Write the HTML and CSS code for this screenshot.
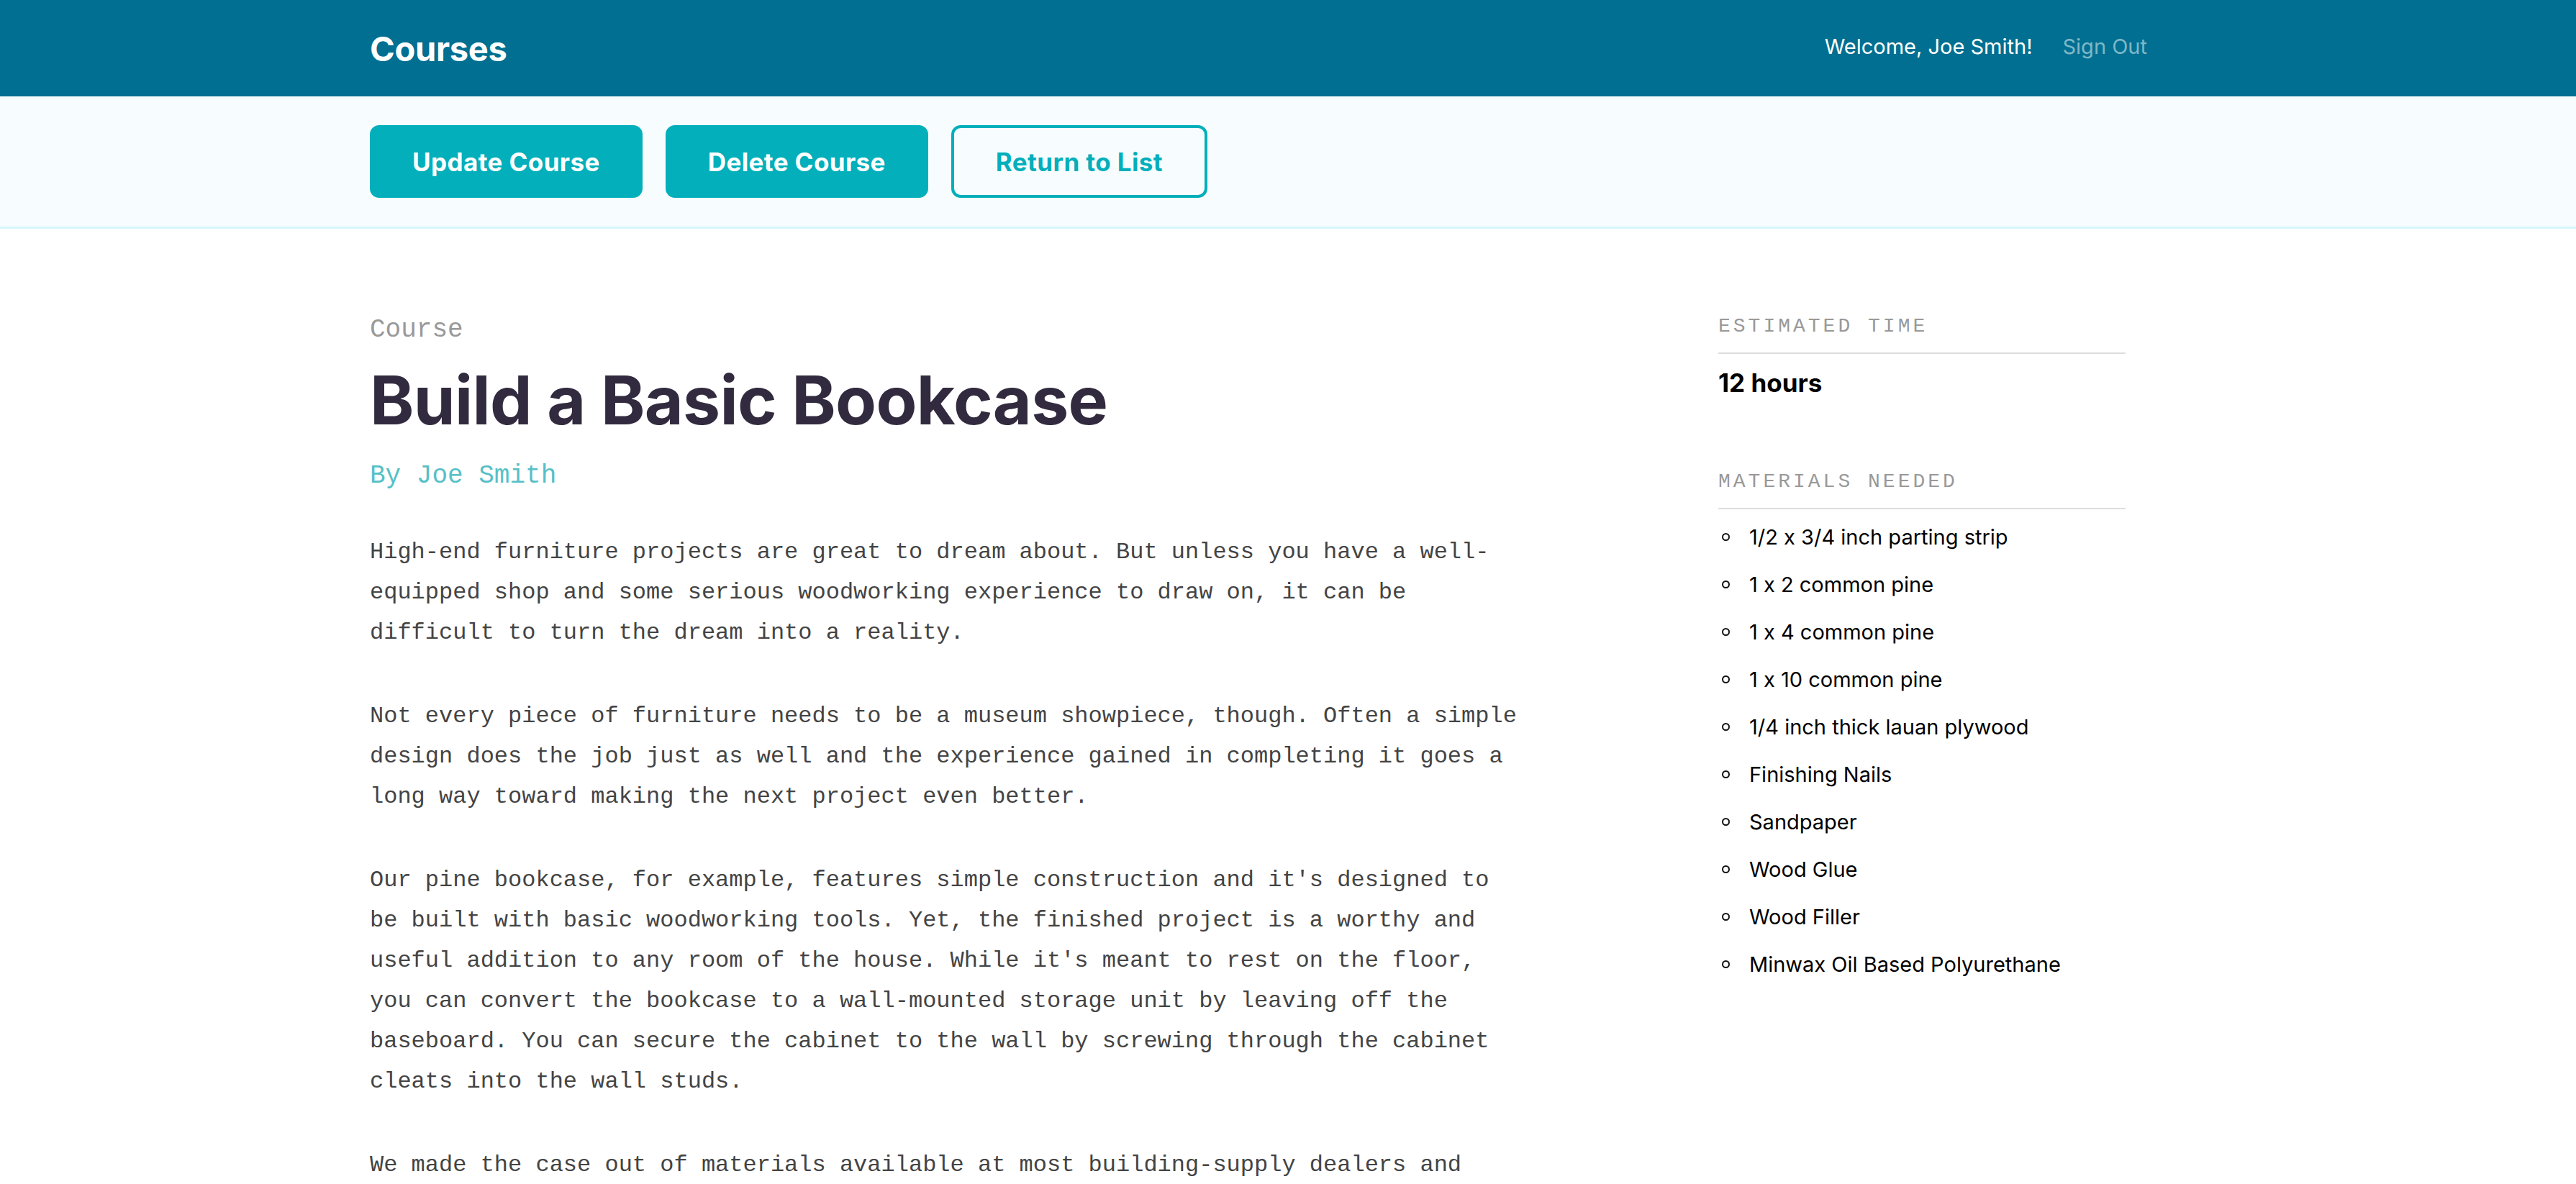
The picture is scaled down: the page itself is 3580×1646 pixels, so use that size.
FILE: index.html
```html
<!DOCTYPE html>
<html lang="en">
<head>
<meta charset="utf-8">
<title>Build a Basic Bookcase</title>
<link rel="stylesheet" href="styles.css">
</head>
<body>
<header class="header">
  <div class="wrap header-inner">
    <h1 class="logo">Courses</h1>
    <nav class="user-nav">
      <span class="welcome">Welcome, Joe Smith!</span>
      <a class="signout" href="#">Sign Out</a>
    </nav>
  </div>
</header>
<div class="actions">
  <div class="wrap actions-inner">
    <a class="btn" href="#">Update Course</a>
    <a class="btn" href="#">Delete Course</a>
    <a class="btn btn-outline" href="#">Return to List</a>
  </div>
</div>
<main class="wrap course">
  <section class="course-main">
    <p class="course-label">Course</p>
    <h2 class="course-title">Build a Basic Bookcase</h2>
    <p class="course-author">By Joe Smith</p>
    <div class="course-desc">
      <p>High-end furniture projects are great to dream about. But unless you have a well-equipped shop and some serious woodworking experience to draw on, it can be difficult to turn the dream into a reality.</p>
      <p>Not every piece of furniture needs to be a museum showpiece, though. Often a simple design does the job just as well and the experience gained in completing it goes a long way toward making the next project even better.</p>
      <p>Our pine bookcase, for example, features simple construction and it's designed to be built with basic woodworking tools. Yet, the finished project is a worthy and useful addition to any room of the house. While it's meant to rest on the floor, you can convert the bookcase to a wall-mounted storage unit by leaving off the baseboard. You can secure the cabinet to the wall by screwing through the cabinet cleats into the wall studs.</p>
      <p>We made the case out of materials available at most building-supply dealers and lumberyards, including 1 x 2, 1 x 4 and 1 x 10 common pine and 1/4-inch-thick lauan plywood.</p>
    </div>
  </section>
  <aside class="course-side">
    <div class="stat">
      <h3 class="stat-label">Estimated Time</h3>
      <p class="stat-value">12 hours</p>
    </div>
    <div class="stat">
      <h3 class="stat-label">Materials Needed</h3>
      <ul class="materials">
        <li><span class="dot"></span>1/2 x 3/4 inch parting strip</li>
        <li><span class="dot"></span>1 x 2 common pine</li>
        <li><span class="dot"></span>1 x 4 common pine</li>
        <li><span class="dot"></span>1 x 10 common pine</li>
        <li><span class="dot"></span>1/4 inch thick lauan plywood</li>
        <li><span class="dot"></span>Finishing Nails</li>
        <li><span class="dot"></span>Sandpaper</li>
        <li><span class="dot"></span>Wood Glue</li>
        <li><span class="dot"></span>Wood Filler</li>
        <li><span class="dot"></span>Minwax Oil Based Polyurethane</li>
      </ul>
    </div>
  </aside>
</main>
</body>
</html>
```

FILE: styles.css
```css
* { box-sizing: border-box; }

html, body {
  margin: 0;
  padding: 0;
  background: #fff;
}

body {
  font-family: Inter, "Noto Sans", "Liberation Sans", sans-serif;
  font-feature-settings: "calt" 0;
  color: #000;
}

.wrap {
  margin: 0 596px 0 514px;
}

/* Header */
.header {
  background: #006f91;
  height: 134px;
}

.header-inner {
  height: 100%;
  display: flex;
  align-items: center;
  justify-content: space-between;
}

.logo {
  margin: 0;
  color: #fff;
  font-size: 47px;
  font-weight: 700;
  letter-spacing: -0.3px;
}

.user-nav {
  display: flex;
  align-items: center;
  gap: 42px;
  font-size: 29px;
  margin-top: -6px;
}

.welcome { color: #fff; }

.signout {
  color: rgba(255, 255, 255, 0.5);
  text-decoration: none;
}

/* Action bar */
.actions {
  background: #f7fdfe;
  border-bottom: 3px solid #d6f6fb;
  padding: 40px 0;
}

.actions-inner {
  display: flex;
  gap: 32px;
}

.btn {
  display: flex;
  align-items: center;
  justify-content: center;
  height: 101px;
  padding: 0 55px;
  border: 4px solid #02afbb;
  border-radius: 13px;
  background: #02afbb;
  color: #fff;
  font-size: 35px;
  font-weight: 700;
  letter-spacing: 0.4px;
  text-decoration: none;
}

.btn-outline {
  background: transparent;
  color: #02afbb;
  padding: 0 58px;
}

/* Course */
.course {
  display: grid;
  grid-template-columns: 1600px 566px;
  column-gap: 274px;
  padding-top: 120px;
}

.course-label {
  margin: 0;
  font-family: "Liberation Mono", monospace;
  font-size: 36px;
  color: #999;
}

.course-title {
  margin: 21px 0 0;
  font-size: 93px;
  font-weight: 700;
  color: #322a3e;
  letter-spacing: -0.7px;
  line-height: 1.21;
}

.course-author {
  margin: 28px 0 0;
  font-family: "Liberation Mono", monospace;
  font-size: 36px;
  color: #57bfc7;
}

.course-desc {
  margin-top: 58px;
}

.course-desc p {
  margin: 0 0 60px;
  font-family: "Liberation Mono", monospace;
  font-size: 32px;
  line-height: 56px;
  color: #444;
}

/* Sidebar */
.stat-label {
  margin: 0;
  padding-bottom: 21px;
  border-bottom: 2px solid #ddd;
  font-family: "Liberation Mono", monospace;
  font-size: 28px;
  font-weight: 400;
  letter-spacing: 4px;
  text-transform: uppercase;
  color: #999;
}

.stat-value {
  margin: 19px 0 101px;
  font-size: 35px;
  font-weight: 700;
}

.materials {
  list-style: none;
  margin: 5px 0 0;
  padding: 0;
}

.materials li {
  display: flex;
  align-items: center;
  height: 66px;
  font-size: 29px;
  color: #000;
}

.dot {
  width: 11px;
  height: 11px;
  margin: 0 27px 0 5px;
  border: 2px solid #111;
  border-radius: 50%;
  flex: none;
}
```
